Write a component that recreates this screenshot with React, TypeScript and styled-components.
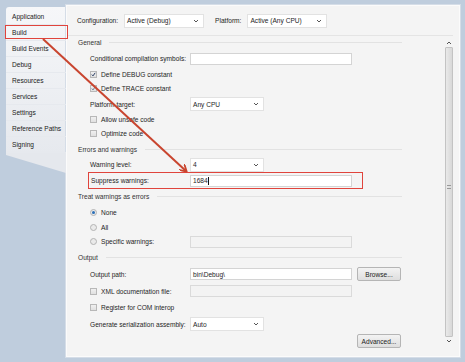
import React from "react";
import styled, { createGlobalStyle } from "styled-components";

const GlobalStyle = createGlobalStyle`
    html, body {
        margin: 0;
        padding: 0;
        background: #bfcddd;
    }
    body {
        font-family: "Liberation Sans", Arial, sans-serif;
        font-size: 6.6px;
        color: #1e1e1e;
    }
`;

const Window = styled.div`
    position: relative;
    width: 465px;
    height: 362px;
    box-sizing: border-box;
    padding: 5px 5px 5px 6px;
    display: flex;
    flex-direction: row;
    align-items: flex-start;
    overflow: hidden;
`;

const SideColumn = styled.div`
    width: 60px;
    flex-shrink: 0;
    margin-top: 2px;
    display: flex;
    flex-direction: column;
`;

const TabList = styled.div`
    background: linear-gradient(to bottom, #f6f7f9, #e6e9ee);
    border-top-left-radius: 3px;
    display: flex;
    flex-direction: column;
    padding-top: 2px;
`;

const TabTail = styled.div`
    height: 20px;
    background: #e5e8ed;
    clip-path: polygon(0 0, 100% 0, 100% 100%, 0 10%);
`;

const TabItem = styled.div`
    position: relative;
    height: 16px;
    display: flex;
    align-items: center;
    padding-left: 6px;
    border-bottom: 1px solid #e6e9ee;
    box-sizing: border-box;
    white-space: nowrap;
    color: #222;
`;

const TabHighlight = styled.div`
    position: absolute;
    left: -1px;
    top: 0px;
    width: 63px;
    height: 14px;
    border: 1.5px solid #e0443c;
    box-sizing: border-box;
    z-index: 3;
`;

const Panel = styled.div`
    flex: 1;
    min-width: 0;
    height: 352px;
    background: #f4f4f4;
    border: 1px solid #fbfbfb;
    box-shadow: 0 0 0 1px #d5dde7;
    display: flex;
    flex-direction: column;
    box-sizing: border-box;
`;

const TopBar = styled.div`
    height: 30px;
    flex-shrink: 0;
    display: flex;
    align-items: center;
    padding-left: 10px;
    gap: 6px;
    margin-right: 6px;
    border-bottom: 1px solid #e4e4e4;
    box-sizing: border-box;
`;

const Body = styled.div`
    flex: 1;
    display: flex;
    flex-direction: row;
`;

const Content = styled.div`
    width: 326px;
    flex-shrink: 0;
    padding-left: 9px;
    display: flex;
    flex-direction: column;
`;

const Row = styled.div<{ $h: number }>`
    height: ${(p) => p.$h}px;
    display: flex;
    align-items: center;
    padding-left: 14px;
    box-sizing: border-box;
    white-space: nowrap;
`;

const HighlightRow = styled(Row)`
    margin-left: 12px;
    padding-left: 2px;
    width: 275px;
    border: 1.5px solid #e0443c;
`;

const ButtonRow = styled(Row)`
    justify-content: flex-end;
    padding-right: 1px;
`;

const Label = styled.span<{ $w?: number }>`
    width: ${(p) => (p.$w ? `${p.$w}px` : "auto")};
    flex-shrink: 0;
    white-space: nowrap;
`;

const SectionHeader = styled.div<{ $h: number }>`
    height: ${(p) => p.$h}px;
    display: flex;
    align-items: center;
    gap: 8px;
    color: #333;
    padding-left: 2px;
    white-space: nowrap;
    &::after {
        content: "";
        flex: 1;
        height: 1px;
        background: #e2e2e2;
    }
`;

const TextBox = styled.div<{ $disabled?: boolean; $w?: number }>`
    width: ${(p) => p.$w ?? 162}px;
    height: 12px;
    flex-shrink: 0;
    box-sizing: border-box;
    background: ${(p) => (p.$disabled ? "#f3f3f3" : "#ffffff")};
    border: 1px solid ${(p) => (p.$disabled ? "#dadada" : "#d4d4d4")};
    display: flex;
    align-items: center;
    padding-left: 2px;
    white-space: nowrap;
`;

const Caret = styled.span`
    display: inline-block;
    width: 1px;
    height: 8px;
    background: #111;
    margin-left: 0.5px;
`;

const Select = styled.div<{ $w: number }>`
    width: ${(p) => p.$w}px;
    height: 14px;
    flex-shrink: 0;
    box-sizing: border-box;
    background: #ffffff;
    border: 1px solid #e2e2e2;
    display: flex;
    align-items: center;
    justify-content: space-between;
    padding: 0 4px 0 2px;
    white-space: nowrap;
`;

const PlatformLabel = styled(Label)`
    margin-left: 5px;
`;

const Check = styled.span`
    width: 7px;
    height: 7px;
    box-sizing: border-box;
    border: 1px solid #b8b8b8;
    background: linear-gradient(#f0f0f0, #e0e0e0);
    margin-right: 4px;
    display: flex;
    align-items: center;
    justify-content: center;
    flex-shrink: 0;
`;

const Radio = styled.span<{ $checked?: boolean }>`
    width: 7px;
    height: 7px;
    border-radius: 50%;
    box-sizing: border-box;
    border: 1px solid #b3b3b3;
    background: #eaeaea;
    margin-right: 4px;
    display: flex;
    align-items: center;
    justify-content: center;
    flex-shrink: 0;
    &::after {
        content: "";
        display: ${(p) => (p.$checked ? "block" : "none")};
        width: 3px;
        height: 3px;
        border-radius: 50%;
        background: #2a6fb8;
    }
`;

const Button = styled.div`
    width: 44px;
    height: 14px;
    flex-shrink: 0;
    box-sizing: border-box;
    border: 1px solid #b5b5b5;
    border-radius: 2px;
    background: linear-gradient(#f3f3f3, #dedede);
    display: flex;
    align-items: center;
    justify-content: center;
    margin-left: 5px;
    color: #222;
`;

const Scrollbar = styled.div`
    width: 9px;
    margin-left: 42px;
    padding-top: 3px;
    display: flex;
    flex-direction: column;
    align-items: center;
    height: 306px;
`;

const ScrollArrow = styled.div`
    height: 8px;
    display: flex;
    align-items: center;
    justify-content: center;
`;

const Thumb = styled.div`
    width: 8px;
    flex: 1;
    box-sizing: border-box;
    border: 1px solid #c3c3c3;
    border-radius: 1px;
    background: linear-gradient(to right, #e9e9e9, #d8d8d8);
    display: flex;
    align-items: center;
    justify-content: center;
`;

const Grip = styled.div`
    width: 4px;
    height: 4px;
    border-top: 1px solid #999;
    border-bottom: 1px solid #999;
    box-sizing: border-box;
    margin-bottom: 10px;
`;

const ArrowOverlay = styled.svg`
    position: absolute;
    left: 0;
    top: 0;
    pointer-events: none;
    z-index: 5;
`;

const Chevron = ({ up }: { up?: boolean }) => (
    <svg width="6" height="4" viewBox="0 0 6 4">
        <path
            d={up ? "M1 3 L3 1 L5 3" : "M1 1 L3 3 L5 1"}
            stroke="#555"
            strokeWidth="1"
            fill="none"
        />
    </svg>
);

const Tick = ({ grayed }: { grayed?: boolean }) => (
    <svg width="5" height="5" viewBox="0 0 5 5">
        <path
            d="M0.8 2.6 L2 3.9 L4.2 0.8"
            stroke={grayed ? "#6b7a90" : "#2c3f66"}
            strokeWidth="1"
            fill="none"
        />
    </svg>
);

const tabs = [
    "Application",
    "Build",
    "Build Events",
    "Debug",
    "Resources",
    "Services",
    "Settings",
    "Reference Paths",
    "Signing",
];

const LW = 100;

export default function App() {
    return (
        <>
            <GlobalStyle />
            <Window>
                <SideColumn>
                    <TabList>
                        {tabs.map((t) => (
                            <TabItem key={t}>
                                {t}
                                {t === "Build" && <TabHighlight />}
                            </TabItem>
                        ))}
                    </TabList>
                    <TabTail />
                </SideColumn>

                <Panel>
                    <TopBar>
                        <Label>Configuration:</Label>
                        <Select $w={80}>
                            Active (Debug) <Chevron />
                        </Select>
                        <PlatformLabel>Platform:</PlatformLabel>
                        <Select $w={80}>
                            Active (Any CPU) <Chevron />
                        </Select>
                    </TopBar>

                    <Body>
                        <Content>
                            <SectionHeader $h={13}>General</SectionHeader>
                            <Row $h={19}>
                                <Label $w={LW}>Conditional compilation symbols:</Label>
                                <TextBox />
                            </Row>
                            <Row $h={13}>
                                <Check><Tick /></Check>
                                Define DEBUG constant
                            </Row>
                            <Row $h={15}>
                                <Check><Tick grayed /></Check>
                                Define TRACE constant
                            </Row>
                            <Row $h={16}>
                                <Label $w={LW}>Platform target:</Label>
                                <Select $w={74}>
                                    Any CPU <Chevron />
                                </Select>
                            </Row>
                            <Row $h={14}>
                                <Check />
                                Allow unsafe code
                            </Row>
                            <Row $h={15}>
                                <Check />
                                Optimize code
                            </Row>

                            <SectionHeader $h={16}>Errors and warnings</SectionHeader>
                            <Row $h={15}>
                                <Label $w={LW}>Warning level:</Label>
                                <Select $w={74}>
                                    4 <Chevron />
                                </Select>
                            </Row>
                            <HighlightRow $h={17}>
                                <Label $w={LW - 1}>Suppress warnings:</Label>
                                <TextBox>
                                    1684<Caret />
                                </TextBox>
                            </HighlightRow>

                            <SectionHeader $h={15}>Treat warnings as errors</SectionHeader>
                            <Row $h={16}>
                                <Radio $checked />
                                None
                            </Row>
                            <Row $h={14}>
                                <Radio />
                                All
                            </Row>
                            <Row $h={15}>
                                <Radio />
                                <Label $w={LW - 11}>Specific warnings:</Label>
                                <TextBox $disabled />
                            </Row>

                            <SectionHeader $h={16}>Output</SectionHeader>
                            <Row $h={18}>
                                <Label $w={LW}>Output path:</Label>
                                <TextBox>bin\Debug\</TextBox>
                                <Button>Browse...</Button>
                            </Row>
                            <Row $h={16}>
                                <Check />
                                <Label $w={LW - 11}>XML documentation file:</Label>
                                <TextBox $disabled />
                            </Row>
                            <Row $h={16}>
                                <Check />
                                Register for COM interop
                            </Row>
                            <Row $h={18}>
                                <Label $w={LW}>Generate serialization assembly:</Label>
                                <Select $w={74}>
                                    Auto <Chevron />
                                </Select>
                            </Row>
                            <ButtonRow $h={16}>
                                <Button>Advanced...</Button>
                            </ButtonRow>
                        </Content>

                        <Scrollbar>
                            <ScrollArrow><Chevron up /></ScrollArrow>
                            <Thumb><Grip /></Thumb>
                            <ScrollArrow><Chevron /></ScrollArrow>
                        </Scrollbar>
                    </Body>
                </Panel>

                <ArrowOverlay width="465" height="362">
                    <defs>
                        <marker
                            id="head"
                            markerWidth="8"
                            markerHeight="8"
                            refX="6"
                            refY="4"
                            orient="auto"
                            markerUnits="userSpaceOnUse"
                        >
                            <path d="M0 0 L7 4 L0 8" stroke="#c9452f" strokeWidth="1.8" fill="none" />
                        </marker>
                    </defs>
                    <line
                        x1="43"
                        y1="39"
                        x2="186"
                        y2="171"
                        stroke="#c9452f"
                        strokeWidth="2"
                        markerEnd="url(#head)"
                    />
                </ArrowOverlay>
            </Window>
        </>
    );
}
